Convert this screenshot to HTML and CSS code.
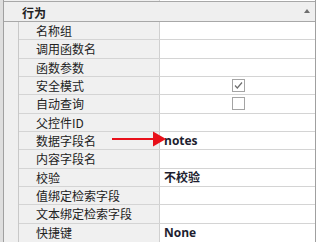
FILE: index.html
```html
<!DOCTYPE html>
<html>
<head>
<meta charset="utf-8">
<link rel="stylesheet" href="styles.css">
</head>
<body>
<div class="grid">
  <div class="stub"><span class="stub-name"></span><span class="stub-value"></span></div>
  <div class="cat">
    <span class="cat-title">行为</span>
    <span class="cat-toggle"></span>
  </div>
  <div class="body">
    <div class="gutter"></div>
    <div class="rows">
      <div class="row"><div class="name">名称组</div><div class="value"></div></div>
      <div class="row"><div class="name">调用函数名</div><div class="value"></div></div>
      <div class="row"><div class="name">函数参数</div><div class="value"></div></div>
      <div class="row"><div class="name">安全模式</div><div class="value center"><span class="check">
        <svg width="11" height="11" viewBox="0 0 11 11"><path d="M2 5.5 L4.3 8 L9 2.5" fill="none" stroke="#6e6e6e" stroke-width="1.2"/></svg></span></div></div>
      <div class="row"><div class="name">自动查询</div><div class="value center"><span class="check"></span></div></div>
      <div class="row"><div class="name">父控件ID</div><div class="value"></div></div>
      <div class="row"><div class="name">数据字段名</div><div class="value bold">notes</div></div>
      <div class="row"><div class="name">内容字段名</div><div class="value"></div></div>
      <div class="row"><div class="name">校验</div><div class="value bold">不校验</div></div>
      <div class="row"><div class="name">值绑定检索字段</div><div class="value"></div></div>
      <div class="row"><div class="name">文本绑定检索字段</div><div class="value"></div></div>
      <div class="row"><div class="name">快捷键</div><div class="value bold">None</div></div>
    </div>
    <svg class="arrow" width="56" height="16" viewBox="0 0 56 16"><rect x="0" y="7" width="42" height="2" fill="#e8101a"/><polygon points="41,0.5 54,8 41,15.5" fill="#e8101a"/></svg>
  </div>
</div>
</body>
</html>
```

FILE: styles.css
```css
html, body {
  margin: 0;
  padding: 0;
}
body {
  width: 318px;
  height: 242px;
  overflow: hidden;
  background: linear-gradient(to right, #dedede 3px, #ffffff 3px);
  font-family: "Noto Sans", "Noto Sans CJK SC", sans-serif;
  font-size: 12px;
  color: #222;
}
.grid {
  margin-left: 3px;
  width: 311px;
  border-left: 1px solid #a0a0a0;
  border-right: 1px solid #a0a0a0;
  border-bottom: 1px solid #a0a0a0;
}
.stub {
  display: flex;
  height: 1px;
}
.stub-name {
  width: 155px;
  background: #f0f0f0;
  border-right: 1px solid #d0d0d0;
}
.stub-value {
  flex: 1;
  background: #fff;
}
.cat {
  height: 19px;
  border-top: 1px solid #a8a8a8;
  border-bottom: 1px solid #a8a8a8;
  background: #efefef;
  display: flex;
  align-items: center;
  justify-content: space-between;
  padding: 0 5px 0 18px;
  box-sizing: content-box;
}
.cat-title {
  font-family: "Noto Sans CJK SC", sans-serif;
  font-weight: bold;
  font-size: 12px;
  color: #222;
  line-height: 12px;
  padding-top: 3px;
}
.cat-toggle {
  width: 0;
  height: 0;
  border-left: 3.5px solid transparent;
  border-right: 3.5px solid transparent;
  border-bottom: 4px solid #6e6e6e;
  margin-bottom: 2px;
}
.body {
  position: relative;
  display: flex;
}
.gutter {
  width: 14px;
  background: #efefef;
  border-right: 1px solid #c8c8c8;
}
.rows {
  flex: 1;
  display: grid;
  grid-template-rows: repeat(12, 18.333px);
}
.row {
  display: flex;
  border-bottom: 1px solid #d4d4d4;
}
.row:last-child {
  border-bottom: none;
}
.name {
  width: 123px;
  padding-left: 17px;
  background: #f0f0f0;
  border-right: 1px solid #d0d0d0;
  font-family: "Noto Sans CJK SC", sans-serif;
  font-size: 12px;
  color: #222;
  display: flex;
  align-items: center;
  white-space: nowrap;
}
.value {
  flex: 1;
  background: #fff;
  padding-left: 4px;
  display: flex;
  align-items: center;
}
.value.center {
  justify-content: center;
  padding-left: 2px;
}
.bold {
  font-family: "Open Sans", "Noto Sans CJK SC", sans-serif;
  font-weight: bold;
  font-size: 12px;
  color: #1e1e30;
}
.check {
  width: 11px;
  height: 11px;
  border: 1px solid #a4a4a4;
  background: #fff;
  display: flex;
}
.arrow {
  position: absolute;
  left: 108px;
  top: 109px;
}
```
